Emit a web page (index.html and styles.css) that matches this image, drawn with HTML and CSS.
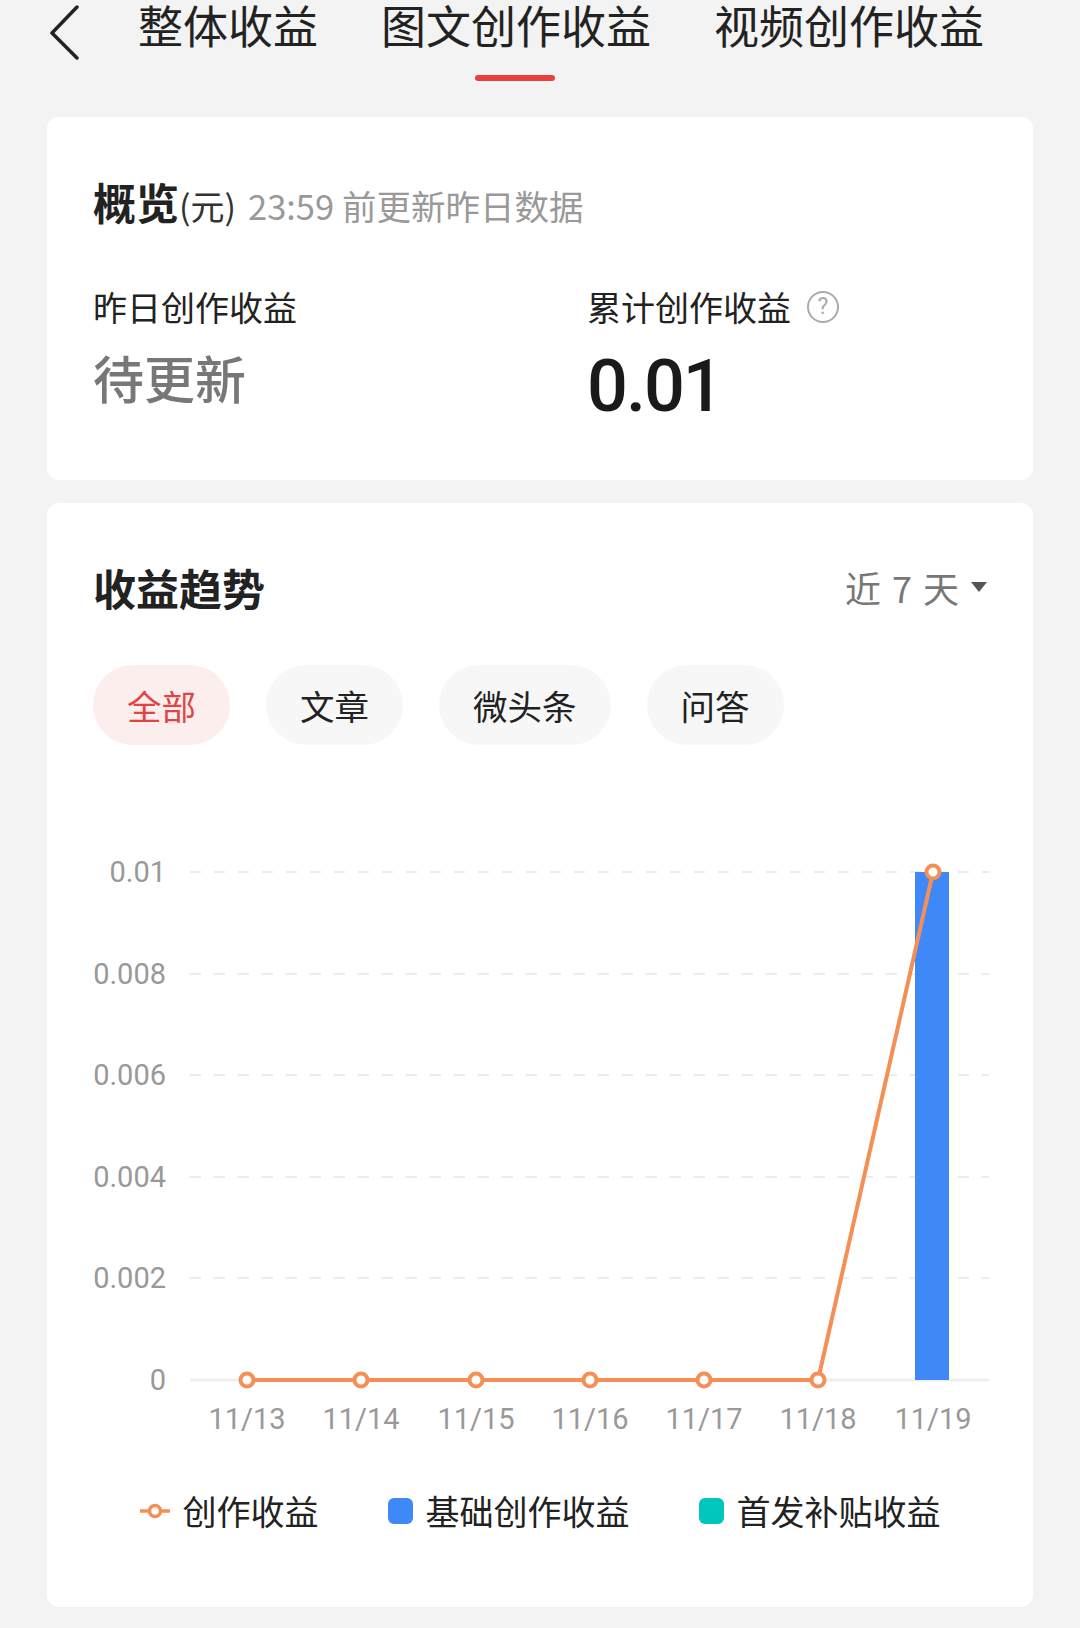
FILE: index.html
```html
<!DOCTYPE html>
<html>
<head>
    <meta charset="UTF-8">
    <meta name="viewport" content="width=device-width, initial-scale=1.0">
    <link rel="stylesheet" href="styles.css">
</head>
<body>
    <div class="nav">
        <svg class="back" width="34" height="56" viewBox="0 0 34 56">
            <polyline points="30,3 5,29 30,54" fill="none" stroke="#222" stroke-width="3.5" stroke-linecap="round" stroke-linejoin="round"/>
        </svg>
        <div class="tab">整体收益</div>
        <div class="tab active">图文创作收益</div>
        <div class="tab">视频创作收益</div>
    </div>

    <div class="card overview">
        <div class="card-head">
            <span class="head-title">概览</span><span class="unit">(元)</span>
            <span class="head-note">23:59 前更新昨日数据</span>
        </div>
        <div class="stats">
            <div class="stat">
                <div class="stat-label">昨日创作收益</div>
                <div class="stat-value pending">待更新</div>
            </div>
            <div class="stat">
                <div class="stat-label">累计创作收益 <span class="help">?</span></div>
                <div class="stat-value number">0.01</div>
            </div>
        </div>
    </div>

    <div class="card trend">
        <div class="trend-head">
            <span class="head-title">收益趋势</span>
            <span class="range">近 7 天 <span class="caret"></span></span>
        </div>
        <div class="pills">
            <span class="pill active">全部</span>
            <span class="pill">文章</span>
            <span class="pill">微头条</span>
            <span class="pill">问答</span>
        </div>

        <!-- 图表 -->
        <svg class="chart" width="986" height="600" viewBox="0 0 986 600">
            <g stroke="#ececec" stroke-width="2" stroke-dasharray="11 13">
                <line x1="143" y1="22" x2="942" y2="22"/>
                <line x1="143" y1="124" x2="942" y2="124"/>
                <line x1="143" y1="225" x2="942" y2="225"/>
                <line x1="143" y1="327" x2="942" y2="327"/>
                <line x1="143" y1="428" x2="942" y2="428"/>
            </g>
            <line x1="143" y1="530" x2="942" y2="530" stroke="#efefef" stroke-width="3"/>

            <g class="axis" text-anchor="end">
                <text x="119" y="32">0.01</text>
                <text x="119" y="134">0.008</text>
                <text x="119" y="235">0.006</text>
                <text x="119" y="337">0.004</text>
                <text x="119" y="438">0.002</text>
                <text x="119" y="540">0</text>
            </g>

            <rect x="868" y="22" width="34" height="508" fill="#3e88f7"/>

            <polyline points="200,530 314,530 429,530 543,530 657,530 771,530 886,22" fill="none" stroke="#f58f55" stroke-width="4" stroke-linejoin="round"/>
            <g fill="#fff" stroke="#f58f55" stroke-width="4">
                <circle cx="200" cy="530" r="6.5"/>
                <circle cx="314" cy="530" r="6.5"/>
                <circle cx="429" cy="530" r="6.5"/>
                <circle cx="543" cy="530" r="6.5"/>
                <circle cx="657" cy="530" r="6.5"/>
                <circle cx="771" cy="530" r="6.5"/>
                <circle cx="886" cy="22" r="6.5"/>
            </g>

            <g class="axis" text-anchor="middle">
                <text x="200" y="579">11/13</text>
                <text x="314" y="579">11/14</text>
                <text x="429" y="579">11/15</text>
                <text x="543" y="579">11/16</text>
                <text x="657" y="579">11/17</text>
                <text x="771" y="579">11/18</text>
                <text x="886" y="579">11/19</text>
            </g>
        </svg>

        <div class="legend">
            <div class="legend-item">
                <svg width="30" height="18" viewBox="0 0 30 18">
                    <line x1="0" y1="9" x2="30" y2="9" stroke="#f58f55" stroke-width="3.5"/>
                    <circle cx="15" cy="9" r="5.5" fill="#fff" stroke="#f58f55" stroke-width="3.5"/>
                </svg>
                <span>创作收益</span>
            </div>
            <div class="legend-item">
                <span class="swatch blue"></span>
                <span>基础创作收益</span>
            </div>
            <div class="legend-item">
                <span class="swatch teal"></span>
                <span>首发补贴收益</span>
            </div>
        </div>
    </div>
</body>
</html>
```

FILE: styles.css
```css
body {
    margin: 0;
    padding: 0 47px 22px;
    background-color: #f3f3f3;
    font-family: "Noto Sans CJK SC", "Noto Sans", sans-serif;
    color: #222;
}

/* 顶部导航 */
.nav {
    display: flex;
    align-items: flex-start;
    gap: 63px;
    height: 117px;
    padding-top: 3px;
    box-sizing: border-box;
}
.back {
    margin-top: 1px;
    margin-right: -6px;
}
.tab {
    position: relative;
    font-size: 45px;
    line-height: 44px;
    color: #222;
}
.tab.active::after {
    content: "";
    position: absolute;
    left: 50%;
    top: 72px;
    width: 80px;
    height: 6px;
    margin-left: -41px;
    border-radius: 3px;
    background-color: #e8413f;
}

/* 卡片 */
.card {
    background-color: #fff;
    border-radius: 12px;
    padding: 0 46px;
}
.overview {
    padding-top: 53px;
    padding-bottom: 55px;
    margin-bottom: 23px;
}
.card-head {
    display: flex;
    align-items: baseline;
    height: 52px;
}
.head-title {
    font-size: 43px;
    font-weight: 700;
    color: #222;
}
.unit {
    font-size: 34px;
    color: #333;
    margin-right: 12px;
}
.head-note {
    font-size: 34.5px;
    color: #999;
}
.stats {
    display: grid;
    grid-template-columns: 494px 1fr;
    margin-top: 65px;
}
.stat-label {
    display: flex;
    align-items: center;
    gap: 16px;
    font-size: 34px;
    line-height: 40px;
    color: #222;
}
.help {
    display: inline-flex;
    justify-content: center;
    align-items: center;
    width: 28px;
    height: 28px;
    border: 2px solid #aaa;
    border-radius: 50%;
    font-family: "Roboto", sans-serif;
    font-size: 23px;
    color: #aaa;
}
.stat-value {
    height: 76px;
    line-height: 76px;
    margin-top: 12px;
}
.pending {
    font-size: 51px;
    font-weight: 500;
    color: #777;
}
.number {
    margin-top: 22px;
    font-family: "Roboto", sans-serif;
    font-size: 72px;
    font-weight: 500;
    color: #1a1a1a;
    letter-spacing: -2px;
}

/* 收益趋势 */
.trend {
    padding-top: 58px;
    padding-bottom: 76px;
}
.trend-head {
    display: flex;
    justify-content: space-between;
    align-items: center;
    height: 52px;
}
.range {
    display: flex;
    align-items: center;
    font-size: 36px;
    word-spacing: 3px;
    color: #777;
}
.caret {
    width: 0;
    height: 0;
    margin-left: 12px;
    border-left: 8px solid transparent;
    border-right: 8px solid transparent;
    border-top: 10px solid #555;
}
.pills {
    display: flex;
    gap: 36px;
    margin-top: 52px;
}
.pill {
    height: 80px;
    line-height: 80px;
    padding: 0 34px;
    border-radius: 40px;
    background-color: #f7f7f7;
    font-size: 34.5px;
    color: #222;
}
.pill.active {
    background-color: #fdeeee;
    color: #e04545;
}
.chart {
    display: block;
    margin: 105px -46px 0;
}
.axis {
    font-family: "Roboto", "Noto Sans", sans-serif;
    font-size: 29px;
    fill: #999;
}
.legend {
    display: flex;
    justify-content: center;
    gap: 69px;
    margin-top: 41px;
}
.legend-item {
    display: flex;
    align-items: center;
    gap: 13px;
    font-size: 34px;
    line-height: 40px;
    color: #222;
}
.swatch {
    width: 25px;
    height: 26px;
    border-radius: 6px;
}
.blue {
    background-color: #3e88f7;
}
.teal {
    background-color: #00c6bd;
}
```
